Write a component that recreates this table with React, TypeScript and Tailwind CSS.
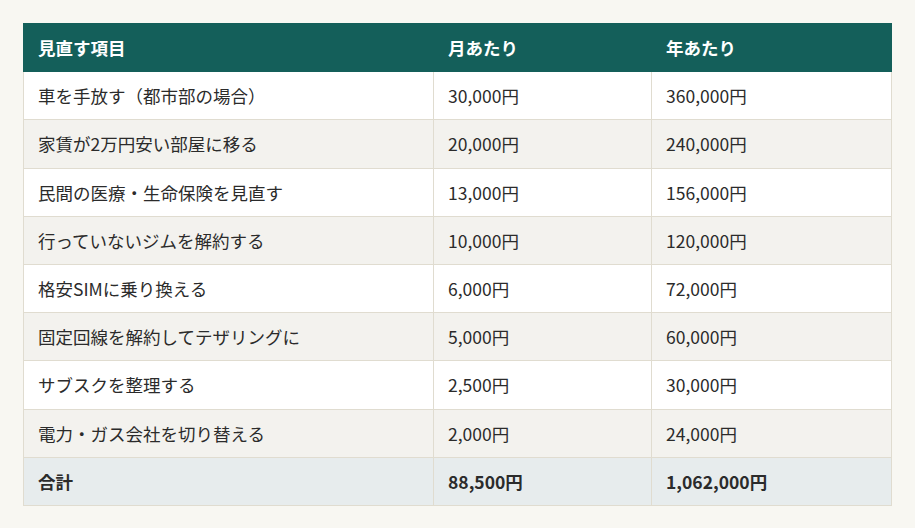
const rows: [string, string, string][] = [
  ['車を手放す（都市部の場合）', '30,000円', '360,000円'],
  ['家賃が2万円安い部屋に移る', '20,000円', '240,000円'],
  ['民間の医療・生命保険を見直す', '13,000円', '156,000円'],
  ['行っていないジムを解約する', '10,000円', '120,000円'],
  ['格安SIMに乗り換える', '6,000円', '72,000円'],
  ['固定回線を解約してテザリングに', '5,000円', '60,000円'],
  ['サブスクを整理する', '2,500円', '30,000円'],
  ['電力・ガス会社を切り替える', '2,000円', '24,000円'],
];

const td = 'border border-[#e0dcd0] px-[14px] py-[11.1px]';
const th = 'border border-[#145f5a] px-[14px] py-[11.1px] font-bold';

export default function App() {
  return (
    <div
      className="min-h-[528px] bg-[#f8f7f2] px-[23px] pt-[23px] text-[17.5px] leading-[25px] text-[#2b2b2b]"
      style={{ fontFamily: '"Noto Sans CJK JP", "Noto Sans", sans-serif' }}
    >
      <table className="w-full border-collapse border border-[#e0dcd0] text-left">
        <colgroup>
          <col className="w-[410px]" />
          <col className="w-[218px]" />
          <col />
        </colgroup>
        <thead>
          <tr className="bg-[#145f5a] text-white">
            <th className={th}>見直す項目</th>
            <th className={th}>月あたり</th>
            <th className={th}>年あたり</th>
          </tr>
        </thead>
        <tbody>
          {rows.map(([name, m, y], i) => (
            <tr key={name} className={i % 2 === 0 ? 'bg-white' : 'bg-[#f3f2ee]'}>
              <td className={td}>{name}</td>
              <td className={td}>{m}</td>
              <td className={td}>{y}</td>
            </tr>
          ))}
          <tr className="bg-[#e7eced] font-bold">
            <td className={td}>合計</td>
            <td className={td}>88,500円</td>
            <td className={td}>1,062,000円</td>
          </tr>
        </tbody>
      </table>
    </div>
  );
}
